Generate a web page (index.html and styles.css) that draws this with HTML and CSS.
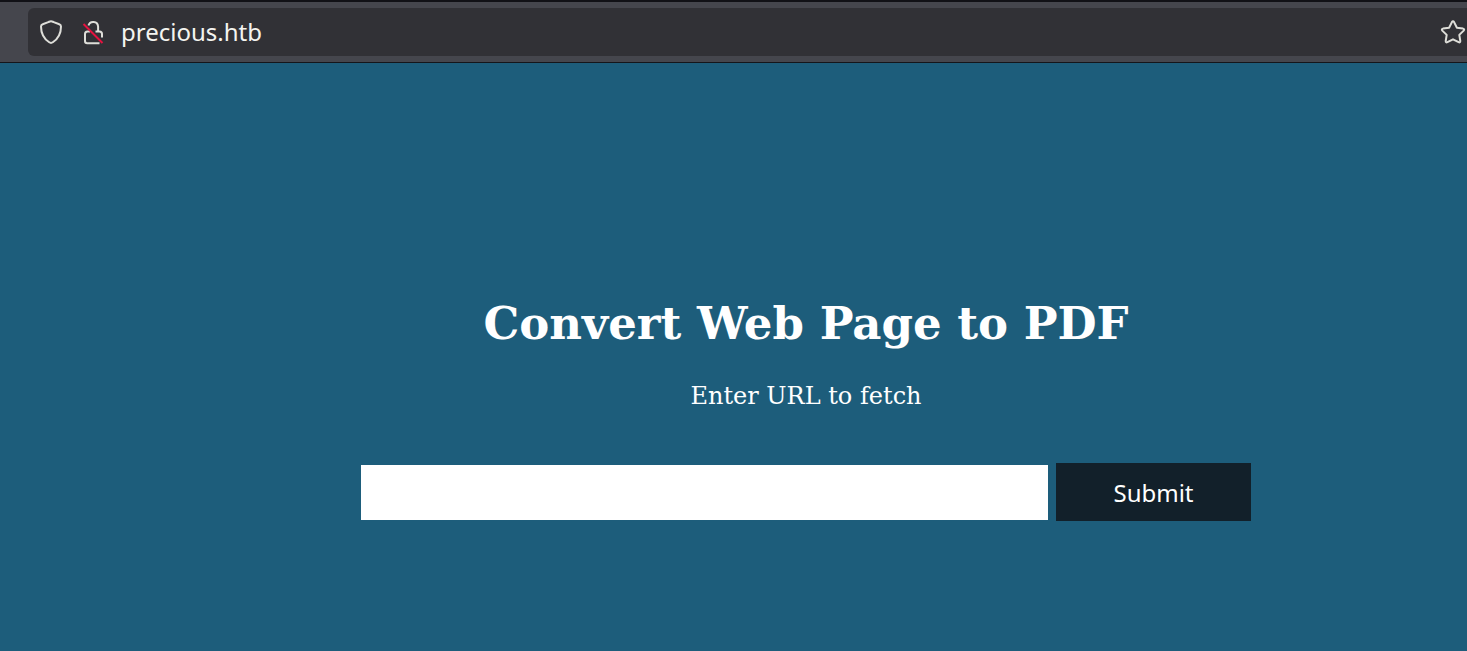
FILE: index.html
```html
<!DOCTYPE html>
<html lang="en">
<head>
  <meta charset="UTF-8" />
  <meta name="viewport" content="width=device-width, initial-scale=1.0"/>
  <title>Convert Web Page to PDF</title>
  <link rel="stylesheet" href="styles.css">
</head>
<body>

<header class="toolbar">
  <div class="urlbar">
    <svg class="icon" viewBox="0 0 28 28" aria-hidden="true">
      <path d="M14 3.2c1 0 1.700.5 2.700.9l5.600 2.100c1.200.4 1.700 1.100 1.700 2.200 0 7.200-3 12.300-8.200 15.900-1.300.9-2.300.9-3.600 0C7 20.700 4 15.600 4 8.400c0-1.100.5-1.800 1.700-2.200l5.600-2.100c1-.4 1.700-.9 2.700-.9z"/>
    </svg>
    <svg class="icon" viewBox="0 0 28 28" aria-hidden="true">
      <path d="M9.500 7.500a4.900 4.900 0 0 1 9.600 1V13.500M16.500 13.500H20.500a2.500 2.500 0 0 1 2.500 2.500V19.500M11 13.500H8.500A2.500 2.500 0 0 0 6 16v7a2.200 2.200 0 0 0 2.200 2.200H20.500"/>
      <path class="slash" d="M4.500 6l19 19"/>
    </svg>
    <span class="address">precious.htb</span>
    <svg class="icon star" viewBox="0 0 28 28" aria-hidden="true">
      <path d="M12.900 4.100q1.100-1.700 2.200 0l2.800 5.600 6.100.9q1.900.5.700 2l-4.400 4.300 1 6.100q0 1.900-1.700 1.200L14 21.300l-5.600 2.900q-1.700.7-1.700-1.200l1-6.100-4.400-4.300q-1.200-1.500.7-2l6.100-.9z"/>
    </svg>
  </div>
</header>

<main class="container">
  <h1>Convert Web Page to PDF</h1>
  <label for="url">Enter URL to fetch</label>
  <form class="fetch-form" onsubmit="return false">
    <input type="text" id="url" name="url" />
    <button type="submit">Submit</button>
  </form>
</main>

</body>
</html>
```
FILE: styles.css
```css
* { box-sizing: border-box; }
body { font-family: "DejaVu Serif", serif; margin: 0; background: #1d5d7b; color: white; }

.toolbar { background: #45464d; border-top: 2px solid #111116; border-bottom: 1px solid #15151a; padding: 6px 0 6px 28px; }
.urlbar { display: flex; align-items: center; height: 48px; padding-left: 9px; background: #313136; border-radius: 6px 0 0 6px; }

.icon { width: 28px; height: 28px; margin-right: 14px; fill: none; stroke: #deded9; stroke-width: 2; stroke-linejoin: round; }
.icon .slash { stroke: #e5123f; }
.star { margin: 0 0 0 auto; }
.address { font-family: "Noto Sans", sans-serif; font-size: 24px; line-height: 32px; color: #f4f4f0; }

.container { display: flex; flex-direction: column; align-items: center; padding: 233px 0 60px 145px; }
h1 { margin: 0; font-size: 45px; line-height: 56px; }
label { margin-top: 28px; font-size: 24px; line-height: 32px; }

.fetch-form { display: flex; align-items: center; gap: 8px; width: 890px; max-width: 100%; margin-top: 51px; }
.fetch-form input { flex: 1; min-width: 0; height: 55px; padding: 0 16px; border: 0; background: white; font-size: 24px; }
.fetch-form button { width: 195px; height: 58px; border: 0; background: #12202a; color: white; font-family: "Noto Sans", sans-serif; font-size: 24px; cursor: pointer; }
```
